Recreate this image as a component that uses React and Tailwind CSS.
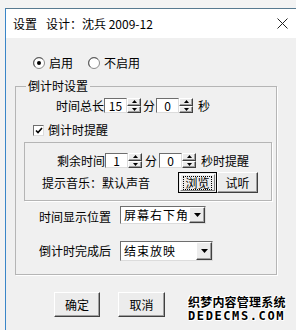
import React from 'react';

const sunken = 'border border-t-[#6e6e6e] border-l-[#6e6e6e] border-b-[#dcdcdc] border-r-[#dcdcdc]';
const raised = 'border border-t-white border-l-white border-b-[#404040] border-r-[#404040] shadow-[inset_-1px_-1px_0_#a0a0a0]';

function Spin({ value }) {
  return (
    <div className="flex h-[15px]">
      <div className={`w-[23px] h-full bg-white ${sunken} flex items-center justify-center leading-none`}>{value}</div>
      <div className="w-[14px] h-full flex flex-col">
        <div className={`flex-1 bg-[#ececec] ${raised} flex items-center justify-center`}>
          <svg width="5" height="3" viewBox="0 0 5 3"><path d="M2.5 0L5 3H0z" fill="#000" /></svg>
        </div>
        <div className={`flex-1 bg-[#ececec] ${raised} flex items-center justify-center`}>
          <svg width="5" height="3" viewBox="0 0 5 3"><path d="M0 0h5L2.5 3z" fill="#000" /></svg>
        </div>
      </div>
    </div>
  );
}

function Radio({ checked }) {
  return (
    <svg width="12" height="12" viewBox="0 0 12 12">
      <circle cx="6" cy="6" r="5.5" fill="#fff" stroke="#8a8a8a" />
      <path d="M2.2 9.8A5 5 0 0 1 9.8 2.2" fill="none" stroke="#5a5a5a" />
      {checked && <circle cx="6" cy="6" r="2" fill="#000" />}
    </svg>
  );
}

function Dropdown({ text, width }) {
  return (
    <div className={`flex h-full bg-white ${sunken} ${width}`}>
      <div className="flex-1 overflow-hidden whitespace-nowrap flex items-center pl-[3px] leading-none tracking-[1px]">{text}</div>
      <div className={`w-[16px] h-full bg-[#ececec] ${raised} flex items-center justify-center`}>
        <svg width="7" height="4" viewBox="0 0 7 4"><path d="M0 0h7L3.5 4z" fill="#000" /></svg>
      </div>
    </div>
  );
}

export default function App() {
  return (
    <div className="relative w-[296px] h-[330px] overflow-hidden bg-[#f3f3f3] pt-[8px] pl-[5px] font-['Noto_Sans_CJK_SC',sans-serif] text-[12px] text-black">
      <div className="h-full flex flex-col bg-[#f0f0f0] border-t border-l border-t-[#587a90] border-l-[#3a86c8]">
        {/* title bar */}
        <div className="h-[29px] bg-white flex items-center justify-between pl-[7px] pr-[8px] shrink-0">
          <span className="text-[12px] leading-none whitespace-nowrap">
            设置<span className="ml-[9px]">设计：沈兵 2009-12</span>
          </span>
          <svg width="11" height="11" viewBox="0 0 11 11"><path d="M0.5 0.5l10 10M10.5 0.5l-10 10" stroke="#222" strokeWidth="1" /></svg>
        </div>

        {/* enable radios */}
        <div className="mt-[18px] h-[14px] pl-[27px] flex items-center leading-none">
          <div className="w-[55px] flex items-center gap-[4px]"><Radio checked /><span>启用</span></div>
          <div className="flex items-center gap-[4px]"><Radio /><span>不启用</span></div>
        </div>

        {/* countdown group */}
        <fieldset className="mt-[9px] ml-[9px] w-[262px] border border-[#b5b5b5] shadow-[1px_1px_0_#fff]">
          <legend className="ml-[10px] px-[2px] leading-[14px]">倒计时设置</legend>

          <div className="mt-[5px] h-[15px] pl-[40px] flex items-center leading-none">
            <span className="w-[48px]">时间总长</span>
            <Spin value="15" />
            <span className="w-[15px] pl-[2px]">分</span>
            <Spin value="0" />
            <span className="ml-[5px]">秒</span>
          </div>

          <div className="mt-[10px] h-[14px] pl-[17px] flex items-center leading-none">
            <div className={`w-[11px] h-[11px] bg-white ${sunken} flex items-center justify-center`}>
              <svg width="8" height="7" viewBox="0 0 8 7"><path d="M1 3.5l2 2L7 1" fill="none" stroke="#000" strokeWidth="1.6" /></svg>
            </div>
            <span className="ml-[4px]">倒计时提醒</span>
          </div>

          {/* reminder sub-group */}
          <div className="mt-[5px] ml-[8px] w-[248px] border border-[#b5b5b5] shadow-[1px_1px_0_#fff] pb-[7px]">
            <div className="mt-[10px] h-[15px] pl-[32px] flex items-center leading-none">
              <span className="w-[48px]">剩余时间</span>
              <Spin value="1" />
              <span className="w-[17px] pl-[3px]">分</span>
              <Spin value="0" />
              <span className="ml-[5px]">秒时提醒</span>
            </div>
            <div className="mt-[4px] h-[21px] pl-[17px] flex items-center leading-none">
              <span className="w-[136px] whitespace-nowrap">提示音乐：默认声音</span>
              <button className="w-[39px] h-full bg-[#ececec] border border-black p-[1px]">
                <div className="h-full border border-t-white border-l-white border-b-[#808080] border-r-[#808080] flex items-center justify-center">
                  <span className="px-[1px] outline outline-1 outline-dotted outline-black leading-none">浏览</span>
                </div>
              </button>
              <button className={`w-[41px] h-full bg-[#ececec] ${raised} leading-none`}>试听</button>
            </div>
          </div>

          <div className="mt-[5px] h-[18px] pl-[23px] flex items-center leading-none">
            <span className="w-[81px] pt-[4px]">时间显示位置</span>
            <Dropdown text="屏幕右下角" width="w-[86px]" />
          </div>

          <div className="mt-[17px] mb-[13px] h-[20px] pl-[23px] flex items-center leading-none">
            <span className="w-[81px]">倒计时完成后</span>
            <Dropdown text="结束放映" width="w-[93px]" />
          </div>
        </fieldset>

        {/* dialog buttons */}
        <div className="mt-[17px] pl-[48px] flex gap-[18px] leading-none">
          <button className={`w-[46px] h-[25px] bg-[#ececec] ${raised}`}>确定</button>
          <button className={`w-[47px] h-[25px] bg-[#ececec] ${raised}`}>取消</button>
        </div>
      </div>

      {/* watermark */}
      <div className="absolute left-[188px] top-[296px] flex flex-col items-start leading-none font-bold [text-shadow:1px_0_0_#fff,-1px_0_0_#fff,0_1px_0_#fff,0_-1px_0_#fff,1px_1px_0_#fff,-1px_-1px_0_#fff]">
        <span className="text-[12px] tracking-[0.2px]">织梦内容管理系统</span>
        <span className="mt-[2px] text-[12px] tracking-[1.6px] font-['DejaVu_Sans_Mono',monospace]">DEDECMS.COM</span>
      </div>
    </div>
  );
}
